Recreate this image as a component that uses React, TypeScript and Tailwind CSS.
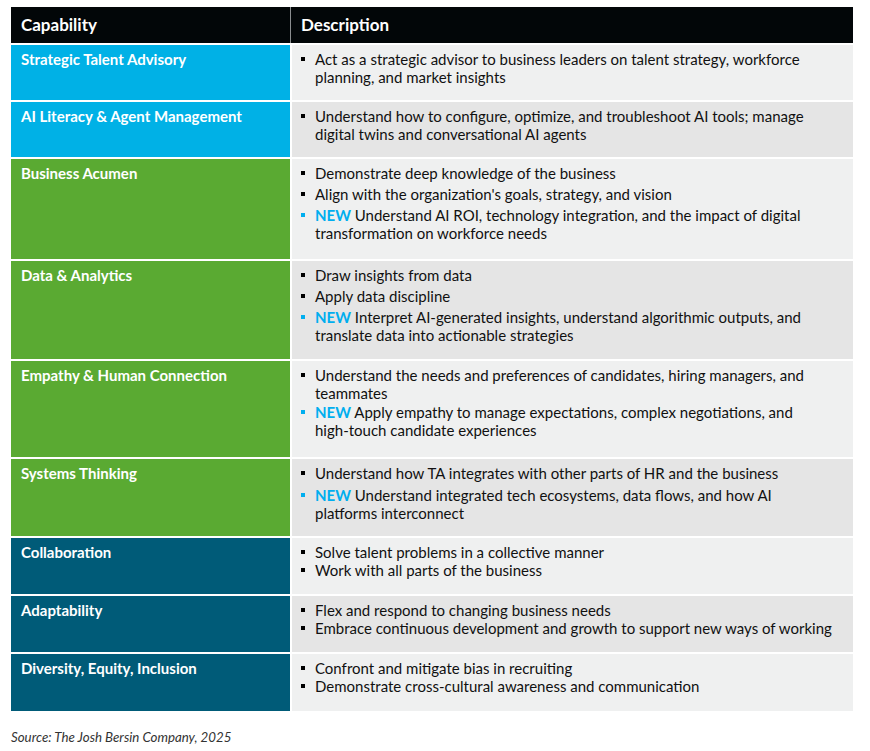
import * as React from "react";

type Item = { text: React.ReactNode; key: string; isNew?: boolean };

interface Row {
  label: string;
  tone: "cyan" | "green" | "teal";
  items: Item[];
  height: string;
  gap: string;
}

const rows: Row[] = [
  {
    label: "Strategic Talent Advisory",
    tone: "cyan",
    height: "h-[55px]",
    gap: "gap-0",
    items: [
      {
        key: "advisor",
        text: "Act as a strategic advisor to business leaders on talent strategy, workforce planning, and market insights",
      },
    ],
  },
  {
    label: "AI Literacy & Agent Management",
    tone: "cyan",
    height: "h-[55px]",
    gap: "gap-0",
    items: [
      {
        key: "configure",
        text: "Understand how to configure, optimize, and troubleshoot AI tools; manage digital twins and conversational AI agents",
      },
    ],
  },
  {
    label: "Business Acumen",
    tone: "green",
    height: "h-[100px]",
    gap: "gap-[3px]",
    items: [
      { key: "deep", text: "Demonstrate deep knowledge of the business" },
      { key: "align", text: "Align with the organization's goals, strategy, and vision" },
      {
        key: "roi",
        text: "Understand AI ROI, technology integration, and the impact of digital transformation on workforce needs",
        isNew: true,
      },
    ],
  },
  {
    label: "Data & Analytics",
    tone: "green",
    height: "h-[98px]",
    gap: "gap-[3px]",
    items: [
      { key: "draw", text: "Draw insights from data" },
      { key: "discipline", text: "Apply data discipline" },
      {
        key: "interpret",
        text: "Interpret AI-generated insights, understand algorithmic outputs, and translate data into actionable strategies",
        isNew: true,
      },
    ],
  },
  {
    label: "Empathy & Human Connection",
    tone: "green",
    height: "h-[96px]",
    gap: "gap-[1px]",
    items: [
      {
        key: "needs",
        text: "Understand the needs and preferences of candidates, hiring managers, and teammates",
      },
      {
        key: "empathy",
        text: (
          <>
            Apply empathy to manage expectations, complex negotiations, and{" "}
            <span className="whitespace-nowrap">high-touch</span> candidate experiences
          </>
        ),
        isNew: true,
      },
    ],
  },
  {
    label: "Systems Thinking",
    tone: "green",
    height: "h-[77px]",
    gap: "gap-[4px]",
    items: [
      { key: "ta", text: "Understand how TA integrates with other parts of HR and the business" },
      {
        key: "eco",
        text: "Understand integrated tech ecosystems, data flows, and how AI platforms interconnect",
        isNew: true,
      },
    ],
  },
  {
    label: "Collaboration",
    tone: "teal",
    height: "h-[56px]",
    gap: "gap-0",
    items: [
      { key: "solve", text: "Solve talent problems in a collective manner" },
      { key: "work", text: "Work with all parts of the business" },
    ],
  },
  {
    label: "Adaptability",
    tone: "teal",
    height: "h-[56px]",
    gap: "gap-0",
    items: [
      { key: "flex", text: "Flex and respond to changing business needs" },
      {
        key: "embrace",
        text: "Embrace continuous development and growth to support new ways of working",
      },
    ],
  },
  {
    label: "Diversity, Equity, Inclusion",
    tone: "teal",
    height: "h-[57px]",
    gap: "gap-0",
    items: [
      { key: "bias", text: "Confront and mitigate bias in recruiting" },
      { key: "cross", text: "Demonstrate cross-cultural awareness and communication" },
    ],
  },
];

const toneClass: Record<Row["tone"], string> = {
  cyan: "bg-[#00b1e6]",
  green: "bg-[#5aaa32]",
  teal: "bg-[#005b78]",
};

function Bullet({ item }: { item: Item }): React.JSX.Element {
  return (
    <li className="flex items-start">
      <span
        className={
          item.isNew
            ? "mt-[7px] mr-[10px] h-[4px] w-[4px] shrink-0 bg-[#00aeef]"
            : "mt-[7px] mr-[10px] h-[4px] w-[4px] shrink-0 bg-black"
        }
        aria-hidden="true"
      />
      <span>
        {item.isNew ? (
          <>
            <b className="font-bold text-[#00aeef]">NEW</b>{" "}
          </>
        ) : null}
        {item.text}
      </span>
    </li>
  );
}

export default function App(): React.JSX.Element {
  return (
    <div
      className="min-h-[751px] w-[870px] bg-white pl-[11px] pt-[7px]"
      style={{ fontFamily: "Lato, 'Open Sans', sans-serif" }}
    >
      <div className="flex w-[842px] flex-col gap-[2px]">
        <div className="flex h-[36px] bg-[#020608] text-[17px] font-bold text-white">
          <div className="flex w-[279px] items-center pl-[10px]">Capability</div>
          <div className="w-px bg-[#8a8d8f]" />
          <div className="flex flex-1 items-center pl-[10px]">Description</div>
        </div>

        {rows.map((row, index) => (
          <div key={row.label} className={`flex gap-[2px] ${row.height}`}>
            <div
              className={`w-[279px] shrink-0 pl-[10px] pt-[5px] text-[15px] leading-[18px] font-bold text-white ${toneClass[row.tone]}`}
            >
              {row.label}
            </div>
            <div
              className={`flex-1 pl-[9px] pr-[17px] pt-[5px] text-[15px] leading-[18px] text-[#111] ${
                index % 2 === 0 ? "bg-[#eff0f0]" : "bg-[#e5e5e5]"
              }`}
            >
              <ul className={`flex flex-col ${row.gap}`}>
                {row.items.map((item) => (
                  <Bullet key={item.key} item={item} />
                ))}
              </ul>
            </div>
          </div>
        ))}
      </div>

      <p className="mt-[17px] text-[13.3px] italic text-[#333]">
        Source: The Josh Bersin Company, 2025
      </p>
    </div>
  );
}
